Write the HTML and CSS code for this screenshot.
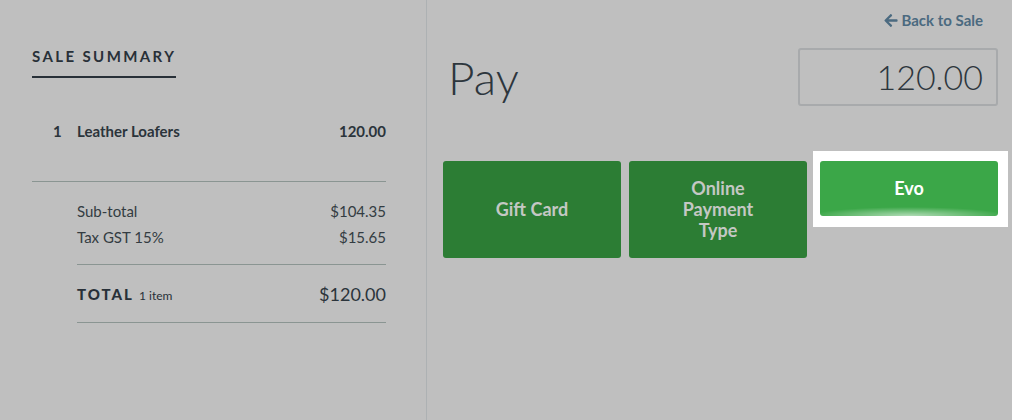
FILE: index.html
```html
<!DOCTYPE html>
<html>
<head>
<meta charset="utf-8">
<link rel="stylesheet" href="styles.css">
</head>
<body>
<div class="app">
  <section class="summary">
    <h2 class="summary-title">SALE SUMMARY</h2>
    <div class="item-row">
      <span class="qty">1</span>
      <span class="item-name">Leather Loafers</span>
      <span class="item-price">120.00</span>
    </div>
    <div class="totals">
      <div class="line"><span>Sub-total</span><span>$104.35</span></div>
      <div class="line"><span>Tax GST 15%</span><span>$15.65</span></div>
    </div>
    <div class="grand">
      <span class="grand-label">TOTAL <small>1 item</small></span>
      <span class="grand-value">$120.00</span>
    </div>
  </section>
  <section class="pay">
    <div class="back-row">
      <a class="back-link" href="#">
        <svg class="back-icon" viewBox="0 0 448 512" width="14" height="15"><path fill="currentColor" d="M257.5 445.1l-22.2 22.2c-9.4 9.4-24.6 9.4-33.9 0L7 273c-9.4-9.4-9.4-24.6 0-33.9L201.4 44.7c9.4-9.4 24.6-9.4 33.9 0l22.2 22.2c9.5 9.5 9.3 25-.4 34.3L136.6 216H424c13.3 0 24 10.7 24 24v32c0 13.3-10.7 24-24 24H136.6l120.5 114.8c9.8 9.3 10 24.8.4 34.3z"/></svg>Back to Sale
      </a>
    </div>
    <div class="pay-head">
      <h1 class="pay-title">Pay</h1>
      <div class="amount">120.00</div>
    </div>
    <div class="methods">
      <button class="method">Gift Card</button>
      <button class="method method-online">Online<br>Payment<br>Type</button>
      <div class="spotlight">
        <button class="method method-evo">Evo</button>
      </div>
    </div>
  </section>
</div>
</body>
</html>
```

FILE: styles.css
```css
* { box-sizing: border-box; }
html, body { margin: 0; padding: 0; }
body {
  background: #bfbfbf;
  font-family: Lato, "Open Sans", sans-serif;
  color: #2b343b;
  width: 1012px;
  height: 420px;
  overflow: hidden;
}
.app {
  display: grid;
  grid-template-columns: 427px minmax(0, 1fr);
  height: 420px;
}
.summary {
  border-right: 1px solid #adb1b3;
  padding: 46px 40px 0 32px;
}
.summary-title {
  display: inline-block;
  margin: 0;
  font-size: 15px;
  font-weight: 700;
  letter-spacing: 2.4px;
  line-height: 18px;
  padding-bottom: 11px;
  border-bottom: 2px solid #283038;
  color: #283038;
}
.item-row {
  display: flex;
  align-items: center;
  margin-top: 43px;
  height: 20px;
  font-size: 15px;
  font-weight: 700;
}
.qty { width: 45px; padding-left: 21px; }
.item-name { flex: 1; }
.totals {
  margin-top: 40px;
  border-top: 1px solid #8a9592;
  padding: 16px 0 14px 45px;
  font-size: 15px;
  color: #333c42;
}
.line {
  display: flex;
  justify-content: space-between;
  line-height: 26px;
}
.grand {
  margin-left: 45px;
  border-top: 1px solid #8a9592;
  border-bottom: 1px solid #8a9592;
  height: 59px;
  display: flex;
  justify-content: space-between;
  align-items: center;
}
.grand-label {
  font-size: 15px;
  font-weight: 900;
  letter-spacing: 2px;
  color: #283038;
}
.grand-label small {
  font-size: 12px;
  font-weight: 400;
  letter-spacing: 0;
}
.grand-value {
  font-size: 18px;
  color: #2b343b;
}
.pay {
  padding: 0 14px 0 16px;
}
.back-row {
  display: flex;
  justify-content: flex-end;
  padding-top: 10px;
  padding-right: 15px;
}
.back-link {
  display: flex;
  align-items: center;
  gap: 3px;
  color: #4b6a80;
  font-size: 15px;
  font-weight: 700;
  text-decoration: none;
  line-height: 20px;
}
.back-icon { display: block; }
.pay-head {
  display: flex;
  justify-content: space-between;
  align-items: center;
  margin-top: 18px;
  height: 58px;
}
.pay-title {
  margin: 0 0 0 5px;
  font-size: 46px;
  font-weight: 300;
  color: #2d363d;
}
.amount {
  width: 200px;
  height: 58px;
  border: 2px solid #a8aaac;
  border-radius: 3px;
  text-align: right;
  padding-right: 13px;
  font-size: 34px;
  font-weight: 300;
  line-height: 54px;
  color: #2d363d;
}
.methods {
  display: flex;
  align-items: flex-start;
  margin-top: 45px;
}
.method {
  flex: none;
  width: 178px;
  height: 97px;
  margin-top: 10px;
  margin-right: 8px;
  border: 0;
  border-radius: 3px;
  background: #2c7d34;
  color: #c4c8c4;
  font-family: Lato, "Open Sans", sans-serif;
  font-size: 18px;
  font-weight: 700;
  line-height: 21px;
  padding: 0;
}
.method-online { margin-right: 6px; }
.spotlight {
  flex: none;
  background: #ffffff;
  padding: 10px 10px 11px 7px;
}
.method-evo {
  margin: 0;
  height: 55px;
  color: #ffffff;
  background:
    radial-gradient(ellipse 55% 9px at 50% 100%, rgba(255,255,255,0.6), rgba(255,255,255,0) 100%),
    #3ba748;
}
```
